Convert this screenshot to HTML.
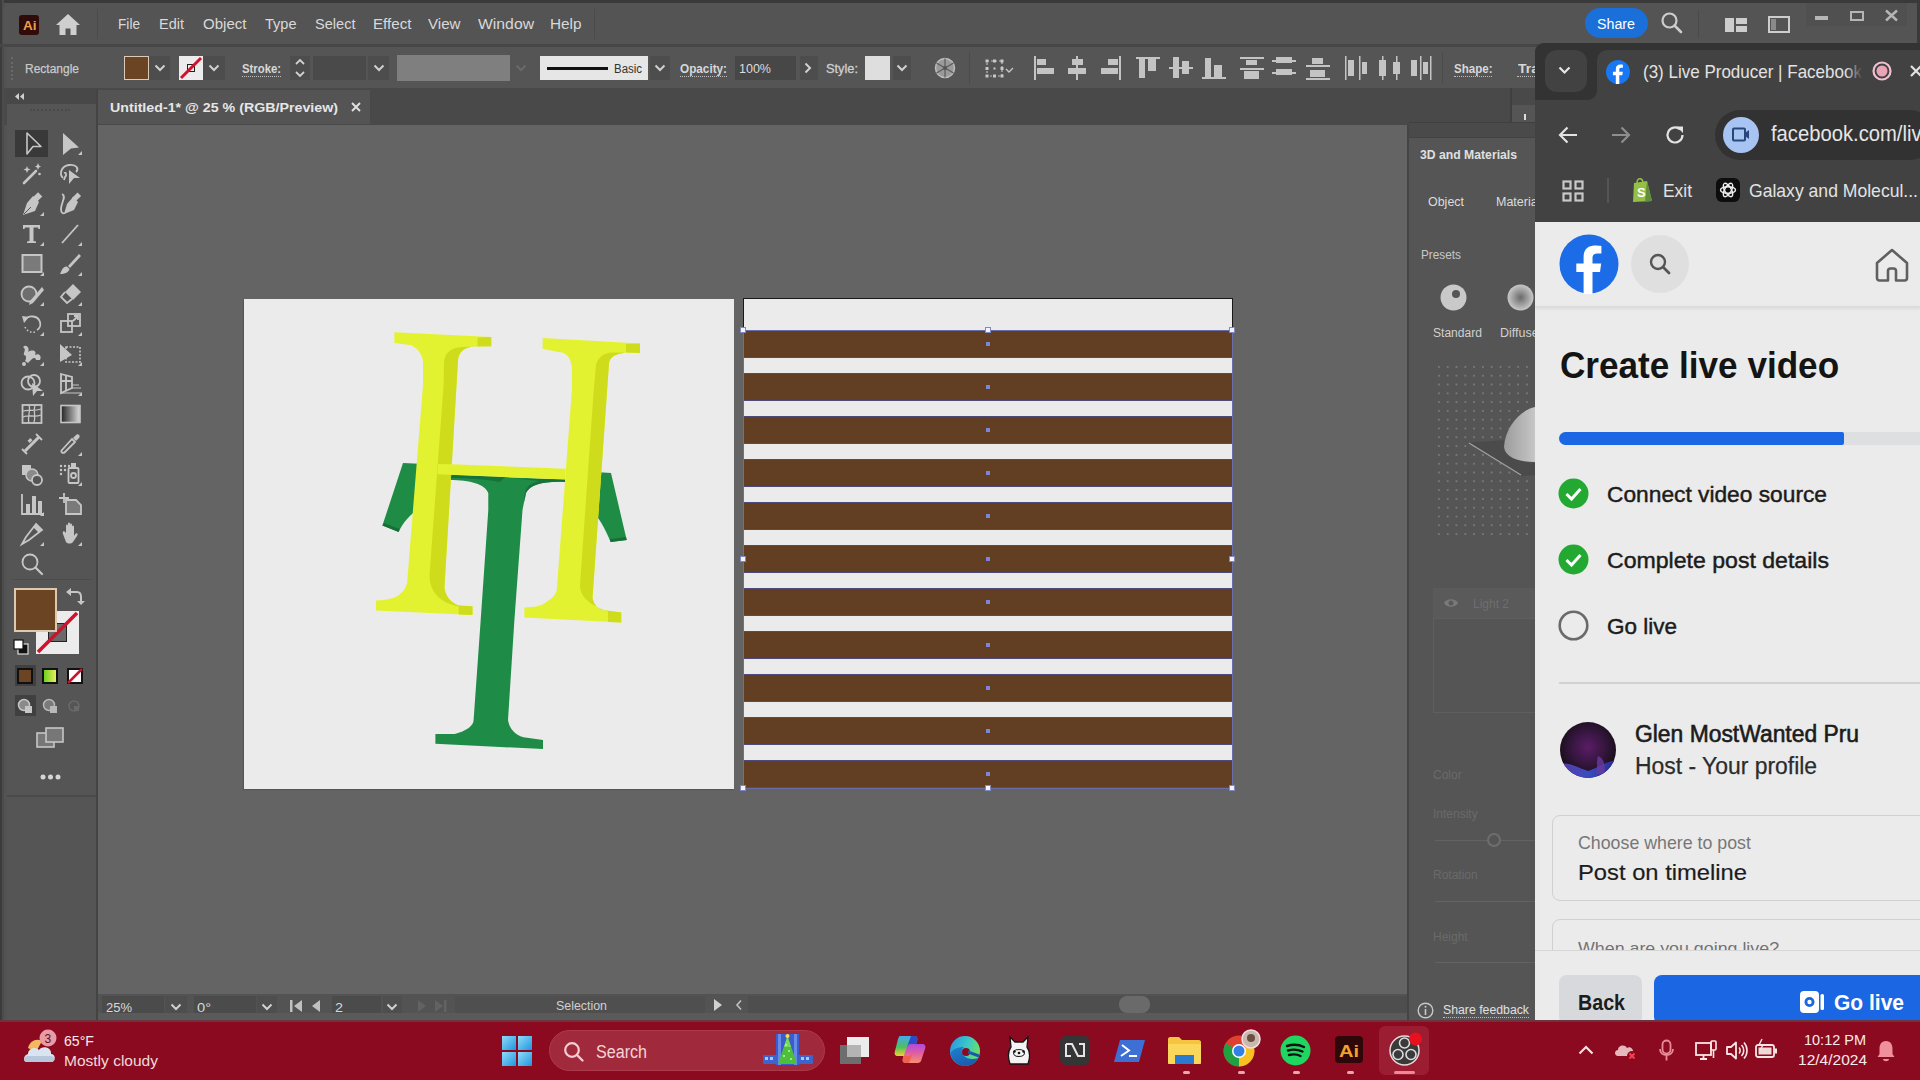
<!DOCTYPE html>
<html><head><meta charset="utf-8">
<style>
*{margin:0;padding:0;box-sizing:border-box}
html,body{width:1920px;height:1080px;overflow:hidden}
body{position:relative;background:#535353;font-family:"Liberation Sans",sans-serif;color:#dcdcdc}
.a{position:absolute}
.t{position:absolute;white-space:nowrap;line-height:1;transform-origin:0 0}
svg{position:absolute;overflow:visible}
.dd{position:absolute;background:#4b4b4b}
.chev{position:absolute;width:8px;height:8px;border-right:2px solid #d0d0d0;border-bottom:2px solid #d0d0d0;transform:rotate(45deg)}
</style></head><body>

<!-- outer frame -->
<div class="a" style="left:0;top:0;width:1920px;height:3px;background:#3a3a3a"></div>
<div class="a" style="left:0;top:0;width:4px;height:1020px;background:#4c4c4c;border-left:2px solid #3c3c3c"></div>

<!-- MENU BAR -->
<div id="menubar" class="a" style="left:3px;top:3px;width:1914px;height:41px;background:#545454;border-top-right-radius:6px;border-top-left-radius:6px"></div>
<div class="a" style="left:1917px;top:0;width:3px;height:47px;background:#3a3a3a"></div>
<div class="a" style="left:19px;top:15px;width:20px;height:20px;background:#310a0a;border-radius:3px"></div>
<div class="t" style="left:22.5px;top:19.0px;font-size:13.0px;color:#f0a048;font-weight:700;transform:scaleX(1.038);">Ai</div>
<svg style="left:56px;top:14px" width="24" height="22" viewBox="0 0 24 22"><path d="M12 0 L24 11 L20.5 11 L20.5 21 L14.5 21 L14.5 14.5 L9.5 14.5 L9.5 21 L3.5 21 L3.5 11 L0 11 Z" fill="#cfcfcf"/></svg>
<div class="a" style="left:97px;top:9px;width:1px;height:30px;background:#4a4a4a"></div>
<div class="t" style="left:118.0px;top:15.9px;font-size:15.5px;color:#d9d9d9;transform:scaleX(0.881);">File</div>
<div class="t" style="left:159.0px;top:15.9px;font-size:15.5px;color:#d9d9d9;transform:scaleX(0.936);">Edit</div>
<div class="t" style="left:203.0px;top:15.9px;font-size:15.5px;color:#d9d9d9;transform:scaleX(0.971);">Object</div>
<div class="t" style="left:265.0px;top:15.9px;font-size:15.5px;color:#d9d9d9;transform:scaleX(0.937);">Type</div>
<div class="t" style="left:314.5px;top:15.9px;font-size:15.5px;color:#d9d9d9;transform:scaleX(0.940);">Select</div>
<div class="t" style="left:372.5px;top:15.9px;font-size:15.5px;color:#d9d9d9;transform:scaleX(0.979);">Effect</div>
<div class="t" style="left:428.0px;top:15.9px;font-size:15.5px;color:#d9d9d9;transform:scaleX(0.976);">View</div>
<div class="t" style="left:477.5px;top:15.9px;font-size:15.5px;color:#d9d9d9;transform:scaleX(1.016);">Window</div>
<div class="t" style="left:550.0px;top:15.9px;font-size:15.5px;color:#d9d9d9;transform:scaleX(0.988);">Help</div>
<div class="a" style="left:594px;top:9px;width:1px;height:30px;background:#4a4a4a"></div>
<div class="a" style="left:1585px;top:8px;width:63px;height:30px;background:#1b6fd8;border-radius:15px"></div>
<div class="t" style="left:1597.0px;top:15.9px;font-size:15.5px;color:#ffffff;transform:scaleX(0.919);">Share</div>
<svg style="left:1661px;top:12px" width="22" height="22" viewBox="0 0 22 22"><circle cx="8.5" cy="8.5" r="7" fill="none" stroke="#cdcdcd" stroke-width="2.2"/><path d="M13.5 13.5 L20 20" stroke="#cdcdcd" stroke-width="2.6" stroke-linecap="round"/></svg>
<div class="a" style="left:1698px;top:10px;width:1px;height:28px;background:#4a4a4a"></div>
<svg style="left:1725px;top:18px" width="22" height="14" viewBox="0 0 22 14"><rect x="0" y="0" width="9" height="14" fill="#cdcdcd"/><rect x="11" y="0" width="11" height="6" fill="#cdcdcd"/><rect x="11" y="8" width="11" height="6" fill="#cdcdcd"/></svg>
<svg style="left:1768px;top:16px" width="22" height="17" viewBox="0 0 22 17"><rect x="1" y="1" width="20" height="15" fill="none" stroke="#cdcdcd" stroke-width="2"/><rect x="3" y="3" width="5" height="11" fill="#8a8a8a"/></svg>
<div class="a" style="left:1806px;top:3px;width:101px;height:23px;background:#505050;border-radius:0 0 3px 3px"></div>
<div class="a" style="left:1815px;top:16px;width:13px;height:4px;background:#b5b5b5"></div>
<div class="a" style="left:1850px;top:10.5px;width:14px;height:10px;border:2.5px solid #b5b5b5"></div>
<svg style="left:1885px;top:10px" width="13" height="11" viewBox="0 0 13 11"><path d="M1 0.5 L12 10.5 M12 0.5 L1 10.5" stroke="#b5b5b5" stroke-width="2.4"/></svg>
<div class="a" style="left:0;top:44px;width:1920px;height:3px;background:#474747"></div>

<!-- CONTROL BAR -->
<div id="ctrl" class="a" style="left:7px;top:47px;width:1910px;height:41px;background:#555555"></div>
<div class="a" style="left:11px;top:57px;width:2px;height:23px;border-left:2px dotted #6a6a6a"></div>
<div class="t" style="left:25.0px;top:63.4px;font-size:12.5px;color:#c9c9c9;transform:scaleX(0.959);-webkit-text-stroke:0.25px #c9c9c9;">Rectangle</div>
<div class="a" style="left:124px;top:56px;width:25px;height:24px;background:#6b4423;border:1.5px solid #d9cbb8"></div>
<div class="a" style="left:149px;top:56px;width:21px;height:24px;background:#4d4d4d"></div><svg style="left:153.5px;top:64.0px" width="12" height="8" viewBox="0 0 12 8"><path d="M1.5 1.5 L6 6 L10.5 1.5" fill="none" stroke="#d0d0d0" stroke-width="2"/></svg>
<div class="a" style="left:179px;top:56px;width:24px;height:24px;background:#ececec"></div>
<div class="a" style="left:187px;top:64px;width:8px;height:8px;border:1.5px solid #222"></div>
<svg style="left:179px;top:56px" width="24" height="24" viewBox="0 0 24 24"><path d="M2 22 L22 2" stroke="#d0112b" stroke-width="3"/></svg>
<div class="a" style="left:203px;top:56px;width:22px;height:24px;background:#4d4d4d"></div><svg style="left:208.0px;top:64.0px" width="12" height="8" viewBox="0 0 12 8"><path d="M1.5 1.5 L6 6 L10.5 1.5" fill="none" stroke="#d0d0d0" stroke-width="2"/></svg>
<div class="t" style="left:242.0px;top:62.7px;font-size:12.5px;color:#d8d8d8;font-weight:700;transform:scaleX(0.906);">Stroke:</div>
<div class="a" style="left:242px;top:75.5px;width:39px;height:1px;border-top:1px dotted #bdbdbd"></div>
<div class="a" style="left:290px;top:56px;width:20px;height:24px;background:#4d4d4d"></div>
<svg style="left:295px;top:58px" width="10" height="20" viewBox="0 0 10 20"><path d="M1 6 L5 2 L9 6 M1 14 L5 18 L9 14" fill="none" stroke="#d0d0d0" stroke-width="1.8"/></svg>
<div class="a" style="left:313px;top:56px;width:53px;height:24px;background:#4a4a4a"></div>
<div class="a" style="left:368px;top:56px;width:21px;height:24px;background:#4d4d4d"></div><svg style="left:372.5px;top:64.0px" width="12" height="8" viewBox="0 0 12 8"><path d="M1.5 1.5 L6 6 L10.5 1.5" fill="none" stroke="#d0d0d0" stroke-width="2"/></svg>
<div class="a" style="left:397px;top:55px;width:113px;height:26px;background:#7f7f7f"></div>
<svg style="left:515px;top:64px" width="12" height="8" viewBox="0 0 12 8"><path d="M1.5 1.5 L6 6 L10.5 1.5" fill="none" stroke="#6a6a6a" stroke-width="2"/></svg>
<div class="a" style="left:540px;top:56px;width:108px;height:24px;background:#e6e6e6"></div>
<div class="a" style="left:547px;top:67px;width:61px;height:2.5px;background:#111"></div>
<div class="t" style="left:614.0px;top:62.8px;font-size:12.0px;color:#333333;transform:scaleX(0.954);">Basic</div>
<div class="a" style="left:650px;top:56px;width:20px;height:24px;background:#4d4d4d"></div><svg style="left:654.0px;top:64.0px" width="12" height="8" viewBox="0 0 12 8"><path d="M1.5 1.5 L6 6 L10.5 1.5" fill="none" stroke="#d0d0d0" stroke-width="2"/></svg>
<div class="t" style="left:680.0px;top:62.7px;font-size:12.5px;color:#d8d8d8;font-weight:700;transform:scaleX(0.940);">Opacity:</div>
<div class="a" style="left:680px;top:75.5px;width:47px;height:1px;border-top:1px dotted #bdbdbd"></div>
<div class="a" style="left:735px;top:56px;width:61px;height:24px;background:#474747"></div>
<div class="t" style="left:739.0px;top:62.0px;font-size:13.0px;color:#dcdcdc;transform:scaleX(0.962);">100%</div>
<div class="a" style="left:800px;top:56px;width:18px;height:24px;background:#4d4d4d"></div>
<svg style="left:804px;top:62px" width="8" height="12" viewBox="0 0 8 12"><path d="M1.5 1.5 L6 6 L1.5 10.5" fill="none" stroke="#d0d0d0" stroke-width="2"/></svg>
<div class="t" style="left:826.0px;top:62.7px;font-size:12.5px;color:#cfcfcf;transform:scaleX(1.024);-webkit-text-stroke:0.3px #cfcfcf;">Style:</div>
<div class="a" style="left:865px;top:56px;width:25px;height:24px;background:#dedede"></div>
<div class="a" style="left:893px;top:56px;width:18px;height:24px;background:#4d4d4d"></div><svg style="left:896.0px;top:64.0px" width="12" height="8" viewBox="0 0 12 8"><path d="M1.5 1.5 L6 6 L10.5 1.5" fill="none" stroke="#d0d0d0" stroke-width="2"/></svg>
<svg style="left:934px;top:57px" width="22" height="22" viewBox="0 0 22 22"><circle cx="11" cy="11" r="9.5" fill="#9a9a9a" stroke="#bdbdbd" stroke-width="1.5"/><path d="M11 11 L11 1.5 M11 11 L19.5 6 M11 11 L19.5 16 M11 11 L11 20.5 M11 11 L2.5 16 M11 11 L2.5 6" stroke="#5a5a5a" stroke-width="1.2"/><circle cx="11" cy="11" r="2" fill="#555"/></svg>
<div class="a" style="left:969px;top:52px;width:1px;height:32px;background:#4c4c4c"></div>
<svg style="left:985px;top:59px" width="32" height="19" viewBox="0 0 32 19"><rect x="2" y="2" width="15" height="15" fill="none" stroke="#bdbdbd" stroke-width="1.2" stroke-dasharray="2 2"/><g fill="#c8c8c8"><rect x="0.5" y="0.5" width="3" height="3"/><rect x="8" y="0.5" width="3" height="3"/><rect x="15.5" y="0.5" width="3" height="3"/><rect x="0.5" y="8" width="3" height="3"/><rect x="15.5" y="8" width="3" height="3"/><rect x="0.5" y="15.5" width="3" height="3"/><rect x="8" y="15.5" width="3" height="3"/><rect x="15.5" y="15.5" width="3" height="3"/><rect x="8.5" y="8.5" width="2" height="2"/></g><path d="M21 10 L24 13 L28 9" fill="none" stroke="#c8c8c8" stroke-width="1.3"/></svg>
<svg style="left:1034px;top:56px" width="26" height="26" viewBox="0 0 26 26"><rect x="0" y="0" width="2" height="24" fill="#c4c4c4"/><rect x="3" y="3" width="9" height="6" fill="#c4c4c4"/><rect x="3" y="12" width="17" height="6" fill="#c4c4c4"/></svg>
<svg style="left:1067px;top:56px" width="26" height="26" viewBox="0 0 26 26"><rect x="9" y="0" width="2" height="24" fill="#c4c4c4"/><rect x="5" y="3" width="11" height="6" fill="#c4c4c4"/><rect x="1" y="12" width="18" height="6" fill="#c4c4c4"/></svg>
<svg style="left:1100px;top:56px" width="26" height="26" viewBox="0 0 26 26"><rect x="19" y="0" width="2" height="24" fill="#c4c4c4"/><rect x="8" y="3" width="10" height="6" fill="#c4c4c4"/><rect x="1" y="12" width="17" height="6" fill="#c4c4c4"/></svg>
<svg style="left:1136px;top:56px" width="26" height="26" viewBox="0 0 26 26"><rect x="0" y="1" width="24" height="2" fill="#c4c4c4"/><rect x="3" y="3" width="6" height="19" fill="#c4c4c4"/><rect x="12" y="3" width="8" height="12" fill="#c4c4c4"/></svg>
<svg style="left:1169px;top:56px" width="26" height="26" viewBox="0 0 26 26"><rect x="0" y="11" width="24" height="2" fill="#c4c4c4"/><rect x="4" y="1" width="6" height="21" fill="#c4c4c4"/><rect x="13" y="5" width="7" height="13" fill="#c4c4c4"/></svg>
<svg style="left:1202px;top:56px" width="26" height="26" viewBox="0 0 26 26"><rect x="0" y="21" width="24" height="2" fill="#c4c4c4"/><rect x="3" y="2" width="6" height="19" fill="#c4c4c4"/><rect x="12" y="9" width="8" height="12" fill="#c4c4c4"/></svg>
<svg style="left:1240px;top:56px" width="26" height="26" viewBox="0 0 26 26"><rect x="0" y="1" width="24" height="2" fill="#c4c4c4"/><rect x="6" y="4" width="11" height="5" fill="#c4c4c4"/><rect x="0" y="12" width="24" height="2" fill="#c4c4c4"/><rect x="4" y="15" width="15" height="8" fill="#c4c4c4"/></svg>
<svg style="left:1272px;top:56px" width="26" height="26" viewBox="0 0 26 26"><rect x="0" y="4" width="24" height="2" fill="#c4c4c4"/><rect x="4" y="1" width="16" height="6" fill="#c4c4c4"/><rect x="0" y="16" width="24" height="2" fill="#c4c4c4"/><rect x="4" y="13" width="16" height="6" fill="#c4c4c4"/></svg>
<svg style="left:1306px;top:56px" width="26" height="26" viewBox="0 0 26 26"><rect x="0" y="9" width="24" height="2" fill="#c4c4c4"/><rect x="6" y="2" width="11" height="6" fill="#c4c4c4"/><rect x="0" y="22" width="24" height="2" fill="#c4c4c4"/><rect x="4" y="14" width="15" height="7" fill="#c4c4c4"/></svg>
<svg style="left:1345px;top:56px" width="26" height="26" viewBox="0 0 26 26"><rect x="0" y="0" width="1.5" height="24" fill="#c4c4c4"/><rect x="3" y="4" width="6" height="16" fill="#c4c4c4"/><rect x="14" y="0" width="1.5" height="24" fill="#c4c4c4"/><rect x="17" y="6" width="5" height="12" fill="#c4c4c4"/></svg>
<svg style="left:1379px;top:56px" width="26" height="26" viewBox="0 0 26 26"><rect x="3" y="0" width="1.5" height="24" fill="#c4c4c4"/><rect x="0" y="4" width="7" height="16" fill="#c4c4c4"/><rect x="17" y="0" width="1.5" height="24" fill="#c4c4c4"/><rect x="14" y="6" width="7" height="12" fill="#c4c4c4"/></svg>
<svg style="left:1411px;top:56px" width="26" height="26" viewBox="0 0 26 26"><rect x="19" y="0" width="1.5" height="24" fill="#c4c4c4"/><rect x="0" y="4" width="6" height="16" fill="#c4c4c4"/><rect x="9" y="0" width="1.5" height="24" fill="#c4c4c4"/><rect x="12" y="6" width="5" height="12" fill="#c4c4c4"/></svg>
<div class="a" style="left:1442px;top:52px;width:1px;height:32px;background:#4c4c4c"></div>
<div class="t" style="left:1454.0px;top:62.7px;font-size:12.5px;color:#d8d8d8;font-weight:700;transform:scaleX(0.924);">Shape:</div>
<div class="a" style="left:1454px;top:75.5px;width:38px;height:1px;border-top:1px dotted #bdbdbd"></div>
<div class="t" style="left:1517.5px;top:62.7px;font-size:12.5px;color:#d8d8d8;font-weight:700;transform:scaleX(1.119);">Tra</div>
<div class="a" style="left:1517px;top:75.5px;width:18px;height:1px;border-top:1px dotted #bdbdbd"></div>

<!-- TAB BAR -->
<div class="a" style="left:4px;top:88px;width:1916px;height:37px;background:#494949"></div>
<div class="a" style="left:98px;top:90px;width:272px;height:34px;background:#545454"></div>
<div class="t" style="left:110.0px;top:100.8px;font-size:13.5px;color:#e6e6e6;font-weight:700;transform:scaleX(1.053);">Untitled-1* @ 25 % (RGB/Preview)</div>
<svg style="left:351px;top:102px" width="10" height="10" viewBox="0 0 10 10"><path d="M1 1 L9 9 M9 1 L1 9" stroke="#e0e0e0" stroke-width="2"/></svg>

<!-- LEFT TOOLBAR -->
<div class="a" style="left:7px;top:89px;width:89px;height:15px;background:#484848"></div>
<svg style="left:15px;top:93px" width="10" height="7" viewBox="0 0 10 7"><path d="M4 0 L0 3.5 L4 7 Z M9 0 L5 3.5 L9 7 Z" fill="#d0d0d0"/></svg>
<div id="tools" class="a" style="left:7px;top:104px;width:89px;height:916px;background:#555555"></div>
<div class="a" style="left:30px;top:109px;width:40px;height:2px;border-top:2px dotted #4a4a4a"></div>
<div class="a" style="left:96px;top:89px;width:2px;height:931px;background:#444"></div>
<div class="a" style="left:15px;top:130px;width:33px;height:27px;background:#393939"></div>
<svg style="left:19px;top:130px" width="26" height="26" viewBox="0 0 26 26"><path d="M8 3 L22 16.5 L14 16.5 L8 24 Z" fill="none" stroke="#c6c6c6" stroke-width="1.6" stroke-linejoin="round"/></svg>
<svg style="left:57px;top:130px" width="26" height="26" viewBox="0 0 26 26"><path d="M6 3 L22 17.5 L14 18.5 L6 25 Z" fill="#c6c6c6"/><path d="M25 21 L25 25 L21 25 Z" fill="#c6c6c6"/></svg>
<svg style="left:19px;top:160px" width="26" height="26" viewBox="0 0 26 26"><path d="M5 23 L17 11" stroke="#c6c6c6" stroke-width="2.6" stroke-linecap="round"/><path d="M8 6 L9 8.5 L11.5 9.5 L9 10.5 L8 13 L7 10.5 L4.5 9.5 L7 8.5Z M19 3 L20 5.5 L22 6.5 L20 7.5 L19 10 L18 7.5 L16 6.5 L18 5.5Z" fill="#c6c6c6"/><circle cx="20.5" cy="14" r="1.3" fill="#c6c6c6"/></svg>
<svg style="left:57px;top:160px" width="26" height="26" viewBox="0 0 26 26"><path d="M6 18 C2 14 4 6 12 5 C20 4 22 9 19 12" fill="none" stroke="#c6c6c6" stroke-width="1.8"/><path d="M7 13 C9 12 10 15 8 17 L7 20" fill="none" stroke="#c6c6c6" stroke-width="1.8"/><path d="M12 10 L23 18 L17 18 L12 24 Z" fill="#c6c6c6"/></svg>
<svg style="left:19px;top:191px" width="26" height="26" viewBox="0 0 26 26"><path d="M14 5 L20 11 L16 20 L4 24 L8 12 Z" fill="#c6c6c6"/><rect x="15" y="2" width="6" height="9" transform="rotate(45 18 6.5)" fill="#c6c6c6"/><path d="M5 23 L12 16" stroke="#555" stroke-width="1"/><path d="M25 21 L25 25 L21 25 Z" fill="#c6c6c6"/></svg>
<svg style="left:57px;top:191px" width="26" height="26" viewBox="0 0 26 26"><path d="M16 6 L21 11 L17 19 L7 23 L10 13 Z" fill="#c6c6c6"/><rect x="17" y="2" width="5" height="8" transform="rotate(45 19.5 6)" fill="#c6c6c6"/><path d="M5 3 C10 5 4 12 4 18 C4 22 6 23 8 22" fill="none" stroke="#c6c6c6" stroke-width="1.8"/></svg>
<svg style="left:19px;top:221px" width="26" height="26" viewBox="0 0 26 26"><path d="M4 4 L21 4 L21 8 L19.5 8 L19 6.5 L14.5 6.5 L14.5 20 L17 20.5 L17 22 L8 22 L8 20.5 L10.5 20 L10.5 6.5 L6 6.5 L5.5 8 L4 8 Z" fill="#c6c6c6"/><path d="M25 21 L25 25 L21 25 Z" fill="#c6c6c6"/></svg>
<svg style="left:57px;top:221px" width="26" height="26" viewBox="0 0 26 26"><path d="M5 22 L21 4" stroke="#c6c6c6" stroke-width="1.8"/><path d="M25 21 L25 25 L21 25 Z" fill="#c6c6c6"/></svg>
<svg style="left:19px;top:251px" width="26" height="26" viewBox="0 0 26 26"><rect x="3.5" y="4" width="19" height="17" fill="#7a7a7a" stroke="#c6c6c6" stroke-width="2"/><path d="M25 21 L25 25 L21 25 Z" fill="#c6c6c6"/></svg>
<svg style="left:57px;top:251px" width="26" height="26" viewBox="0 0 26 26"><path d="M22 3 L24 5 L13 17 L11 15 Z" fill="#c6c6c6"/><path d="M10 15.5 C6 15 5 19 3 23 C8 23 12 21 12.5 18 Z" fill="#c6c6c6"/><path d="M25 21 L25 25 L21 25 Z" fill="#c6c6c6"/></svg>
<svg style="left:19px;top:281px" width="26" height="26" viewBox="0 0 26 26"><circle cx="10" cy="13" r="7.5" fill="#6e6e6e" stroke="#c6c6c6" stroke-width="1.8"/><path d="M23 6 L11 20 L10 24 L14 22 L25 9 Z" fill="#c6c6c6"/><path d="M25 21 L25 25 L21 25 Z" fill="#c6c6c6"/></svg>
<svg style="left:57px;top:281px" width="26" height="26" viewBox="0 0 26 26"><path d="M16 3 L24 11 L16 19 L8 11 Z" fill="#c6c6c6"/><path d="M8 11 L4 16 L10 22 L15 18" fill="none" stroke="#c6c6c6" stroke-width="1.8"/><path d="M25 21 L25 25 L21 25 Z" fill="#c6c6c6"/></svg>
<svg style="left:19px;top:311px" width="26" height="26" viewBox="0 0 26 26"><path d="M6 9 C9 4 19 4 21 11 C22 15 20 18 18 19" fill="none" stroke="#c6c6c6" stroke-width="1.8"/><path d="M3 5 L10 6 L5 12 Z" fill="#c6c6c6"/><path d="M6 16 C8 20 12 22 16 21" fill="none" stroke="#c6c6c6" stroke-width="1.6" stroke-dasharray="1.5 2"/><path d="M25 21 L25 25 L21 25 Z" fill="#c6c6c6"/></svg>
<svg style="left:57px;top:311px" width="26" height="26" viewBox="0 0 26 26"><rect x="11" y="3" width="12" height="12" fill="none" stroke="#c6c6c6" stroke-width="1.8"/><rect x="4" y="10" width="11" height="11" fill="none" stroke="#c6c6c6" stroke-width="1.8"/><path d="M16 10 L21 5 M17 5 L21 5 L21 9" fill="none" stroke="#c6c6c6" stroke-width="1.8"/><path d="M25 21 L25 25 L21 25 Z" fill="#c6c6c6"/></svg>
<svg style="left:19px;top:341px" width="26" height="26" viewBox="0 0 26 26"><path d="M4 6 C8 2 11 8 9 11 C14 8 18 10 16 14 C20 12 23 15 21 19 L17 19 C17 17 15 16 13 18 L9 22 L6 20 C8 17 7 14 5 14 C4 11 8 9 4 6 Z" fill="#c6c6c6"/><circle cx="5" cy="23" r="2" fill="#c6c6c6"/><path d="M25 21 L25 25 L21 25 Z" fill="#c6c6c6"/></svg>
<svg style="left:57px;top:341px" width="26" height="26" viewBox="0 0 26 26"><rect x="9" y="6" width="14" height="15" fill="none" stroke="#c6c6c6" stroke-width="1.6" stroke-dasharray="2 1.5"/><path d="M3 3 L15 14 L3 21 Z" fill="#c6c6c6"/><path d="M25 21 L25 25 L21 25 Z" fill="#c6c6c6"/></svg>
<svg style="left:19px;top:371px" width="26" height="26" viewBox="0 0 26 26"><circle cx="9" cy="12" r="6.5" fill="none" stroke="#c6c6c6" stroke-width="1.8"/><circle cx="15" cy="10" r="6" fill="none" stroke="#c6c6c6" stroke-width="1.8"/><path d="M13 12 L24 20 L18 20 L14 25 Z" fill="#c6c6c6"/><path d="M25 21 L25 25 L21 25 Z" fill="#c6c6c6"/></svg>
<svg style="left:57px;top:371px" width="26" height="26" viewBox="0 0 26 26"><path d="M4 3 L15 6 L15 17 L4 22 Z M4 10 L15 10 M9 4 L9 20" fill="none" stroke="#c6c6c6" stroke-width="1.8"/><path d="M15 14 L22 14 M15 17 L24 17 M4 22 L24 22" stroke="#c6c6c6" stroke-width="1"/><path d="M25 21 L25 25 L21 25 Z" fill="#c6c6c6"/></svg>
<svg style="left:19px;top:401px" width="26" height="26" viewBox="0 0 26 26"><rect x="3.5" y="4" width="19" height="18" fill="none" stroke="#c6c6c6" stroke-width="1.8"/><path d="M4 10 C10 8 14 11 22 8 M4 16 C10 13 15 17 22 14 M10 4 C12 10 8 16 10 22 M16 4 C14 10 17 15 15 22" fill="none" stroke="#c6c6c6" stroke-width="1.3"/></svg>
<svg style="left:57px;top:401px" width="26" height="26" viewBox="0 0 26 26"><defs><linearGradient id="gr1"><stop offset="0" stop-color="#222"/><stop offset="1" stop-color="#ddd"/></linearGradient></defs><rect x="4" y="4.5" width="19" height="17" fill="url(#gr1)" stroke="#c6c6c6" stroke-width="1.6"/></svg>
<svg style="left:19px;top:431px" width="26" height="26" viewBox="0 0 26 26"><path d="M6 20 L20 6" stroke="#c6c6c6" stroke-width="3"/><path d="M3 18 L8 23 M17 3 L23 9" stroke="#c6c6c6" stroke-width="1.8"/><rect x="9" y="8" width="4" height="3" transform="rotate(-45 11 9.5)" fill="#c6c6c6"/></svg>
<svg style="left:57px;top:431px" width="26" height="26" viewBox="0 0 26 26"><path d="M19 4 C21 2 24 5 22 7 L19 10 L16 7 Z" fill="#c6c6c6"/><path d="M15 8 L18 11 L8 21 C6 23 3 21 5 19 Z" fill="none" stroke="#c6c6c6" stroke-width="1.8"/><path d="M25 21 L25 25 L21 25 Z" fill="#c6c6c6"/></svg>
<svg style="left:19px;top:461px" width="26" height="26" viewBox="0 0 26 26"><rect x="3" y="4" width="9" height="10" fill="#c6c6c6"/><circle cx="13" cy="14" r="6" fill="#8a8a8a" stroke="#c6c6c6" stroke-width="1.5"/><circle cx="18" cy="19" r="5" fill="#555" stroke="#c6c6c6" stroke-width="1.8"/></svg>
<svg style="left:57px;top:461px" width="26" height="26" viewBox="0 0 26 26"><g fill="#c6c6c6"><circle cx="4" cy="5" r="1.2"/><circle cx="8" cy="5" r="1.2"/><circle cx="12" cy="5" r="1.2"/><circle cx="4" cy="9" r="1.2"/><circle cx="8" cy="9" r="1.2"/><circle cx="4" cy="13" r="1.2"/><rect x="14" y="2" width="5" height="4"/></g><rect x="11.5" y="7" width="10" height="15" rx="1" fill="none" stroke="#c6c6c6" stroke-width="1.8"/><circle cx="16.5" cy="14.5" r="2.5" fill="none" stroke="#c6c6c6" stroke-width="1.8"/><path d="M25 21 L25 25 L21 25 Z" fill="#c6c6c6"/></svg>
<svg style="left:19px;top:491px" width="26" height="26" viewBox="0 0 26 26"><path d="M3 3 L3 23 L24 23" fill="none" stroke="#c6c6c6" stroke-width="1.8"/><rect x="7" y="13" width="4" height="9" fill="#c6c6c6"/><rect x="13" y="5" width="4" height="17" fill="#c6c6c6"/><rect x="19" y="10" width="4" height="12" fill="#c6c6c6"/><path d="M25 21 L25 25 L21 25 Z" fill="#c6c6c6"/></svg>
<svg style="left:57px;top:491px" width="26" height="26" viewBox="0 0 26 26"><path d="M7 2 L7 12 M2 7 L12 7" fill="none" stroke="#c6c6c6" stroke-width="1.8"/><path d="M9 9 L19 9 L24 14 L24 23 L9 23 Z" fill="#7a7a7a" stroke="#c6c6c6" stroke-width="1.8"/></svg>
<svg style="left:19px;top:521px" width="26" height="26" viewBox="0 0 26 26"><path d="M17 3 L23 9 L10 19 L3 23 L7 16 Z" fill="none" stroke="#c6c6c6" stroke-width="1.8"/><path d="M17 3 L23 9 L20 12 L14 6 Z" fill="#c6c6c6"/><path d="M25 21 L25 25 L21 25 Z" fill="#c6c6c6"/></svg>
<svg style="left:57px;top:521px" width="26" height="26" viewBox="0 0 26 26"><path d="M6 13 C5 10 7 9 9 12 L9 5 C9 3 11 3 11 5 L11 3 C11 1 13 1 13 3 L13 4 C13 2 15 2 15 4 L15 6 C15 4 17 4 17 6 L17 15 C19 11 22 12 20 15 L16 21 C14 23 11 23 9 21 Z" fill="#c6c6c6"/><path d="M25 21 L25 25 L21 25 Z" fill="#c6c6c6"/></svg>
<svg style="left:19px;top:551px" width="26" height="26" viewBox="0 0 26 26"><circle cx="11" cy="11" r="7.5" fill="none" stroke="#c6c6c6" stroke-width="1.8"/><path d="M16.5 16.5 L23 23" stroke="#c6c6c6" stroke-width="2.2" stroke-linecap="round"/></svg>
<div class="a" style="left:12px;top:579px;width:80px;height:1px;background:#4c4c4c"></div>
<div class="a" style="left:36px;top:611px;width:43px;height:43px;background:#ececec"></div>
<div class="a" style="left:48px;top:623px;width:19px;height:19px;background:#6a6a6a;border:1.5px solid #222"></div>
<svg style="left:36px;top:611px" width="43" height="43" viewBox="0 0 43 43"><path d="M2 41 L41 2" stroke="#d0112b" stroke-width="3.5"/></svg>
<div class="a" style="left:14px;top:588px;width:43px;height:44px;background:#6b4423;border:2px solid #dcc9b0"></div>
<svg style="left:66px;top:588px" width="18" height="18" viewBox="0 0 18 18"><path d="M3 4 L11 4 C14 4 15 6 15 9 L15 13" fill="none" stroke="#c6c6c6" stroke-width="2"/><path d="M0 4 L5 0 L5 8 Z M11 13 L19 13 L15 17 Z" fill="#c6c6c6"/></svg>
<svg style="left:13px;top:639px" width="16" height="16" viewBox="0 0 16 16"><rect x="5" y="5" width="10" height="10" fill="#111" stroke="#ddd" stroke-width="1.2"/><rect x="1" y="1" width="9" height="9" fill="#fff" stroke="#111" stroke-width="1.2"/></svg>
<div class="a" style="left:15px;top:665px;width:21px;height:21px;background:#404040"></div>
<div class="a" style="left:17px;top:668px;width:16px;height:16px;background:#6b4423;border:2px solid #111"></div>
<div class="a" style="left:42px;top:668px;width:16px;height:16px;background:linear-gradient(90deg,#6fd21e,#e8f060);border:2px solid #111"></div>
<div class="a" style="left:67px;top:668px;width:16px;height:16px;background:#fff;border:2px solid #111;overflow:hidden"></div>
<svg style="left:67px;top:668px" width="16" height="16" viewBox="0 0 16 16"><path d="M1 15 L15 1" stroke="#d0112b" stroke-width="2.5"/></svg>
<div class="a" style="left:15px;top:695px;width:21px;height:21px;background:#404040"></div>
<svg style="left:16px;top:697px" width="20" height="18" viewBox="0 0 20 18"><circle cx="8" cy="8" r="5.5" fill="#8a8a8a" stroke="#c6c6c6" stroke-width="1.5"/><rect x="9" y="9" width="7" height="7" fill="#c6c6c6"/></svg>
<svg style="left:41px;top:697px" width="20" height="18" viewBox="0 0 20 18"><circle cx="8" cy="8" r="5.5" fill="#7a7a7a" stroke="#b8b8b8" stroke-width="1.5"/><rect x="9" y="9" width="7" height="7" fill="#b8b8b8"/></svg>
<svg style="left:66px;top:697px" width="18" height="18" viewBox="0 0 18 18"><circle cx="8" cy="9" r="5" fill="none" stroke="#6a6a6a" stroke-width="1.5"/><rect x="8" y="9" width="5" height="5" fill="#6a6a6a"/></svg>
<svg style="left:36px;top:727px" width="29" height="22" viewBox="0 0 29 22"><rect x="1" y="6" width="17" height="14" fill="#777" stroke="#c6c6c6" stroke-width="1.6"/><rect x="10" y="1" width="17" height="14" fill="#777" stroke="#c6c6c6" stroke-width="1.6"/></svg>
<svg style="left:40px;top:774px" width="21" height="6" viewBox="0 0 21 6"><circle cx="3" cy="3" r="2.5" fill="#d6d6d6"/><circle cx="10.5" cy="3" r="2.5" fill="#d6d6d6"/><circle cx="18" cy="3" r="2.5" fill="#d6d6d6"/></svg>
<div class="a" style="left:7px;top:795px;width:89px;height:2px;background:#4a4a4a"></div>

<!-- CANVAS -->
<div id="canvas" class="a" style="left:98px;top:125px;width:1309px;height:869px;background:#646464"></div>
<div class="a" style="left:244px;top:299px;width:490px;height:490px;background:#ebebeb;box-shadow:-1px 1px 1px #555"></div>
<svg style="left:244px;top:299px" width="490" height="490" viewBox="244 299 490 490">
 <path d="M403 463 L425 464 L425 505 C412 512 403 522 398.7 531.9 L382.4 525.6 Z" fill="#1e8c45"/>
 <path d="M382.4 525.6 L398.7 531.9 L399.5 529 L384 523 Z" fill="#176f37"/>
 <path d="M580 471 L611 473 L626.7 540 L610.6 542 C605 528 598 515 586 505 L580 500 Z" fill="#1e8c45"/>
 <path d="M610.6 542 L626.7 540 L626 537 L610 539 Z" fill="#176f37"/>
 <path d="M437.5 474.2 L565 479.6 L565 482 C545 481 530 484 525.8 493.3 L522.5 510 L514.4 620 L508 720 C509 728 515 735 523.5 737.3 L543 739.9 L543 749 L435.4 743.8 L435.4 734 L454.8 734 C466 731 473.6 726 473.6 720 L480.7 620 L488.3 510 L488.3 493.3 C485 484 470 480 450 480 L437.5 480 Z" fill="#1e8c46"/>
 <path d="M437.5 474.2 L505 477 L500 482 C490 480 470 478 450 478 L437.5 479 Z" fill="#17713a"/>
 <path d="M515 478.5 L565 479.6 L565 482 C545 481 530 484 525.8 493.3 L524.5 502 C523 490 528 483 540 481 Z" fill="#17713a"/>
 <path d="M394.4 332.2 L491.25 336.9 L491.25 346.25 L472.5 346.6 C464 348 459 352 458 360 L444.4 588 C446 598 452 603 458.75 605.5 L472.5 606.25 L472.5 615 L376 610.6 L376 600.6 C388 600 396 598 400 594 C405 590 407.5 585 407.5 578 L423 385 L423 362 C422 352 415 346 410 345 L394.4 343.1 Z" fill="#e3f230"/>
 <path d="M477.5 337.5 L491.25 336.9 L491.25 346.25 L472.5 346.6 C464 348 459 352 458 360 L444.4 588 C446 598 452 603 458.75 605.5 L472.5 606.25 L472.5 615 L458.75 614.6 L458.75 606.5 C443 603 429.5 595 429.5 575 L443.6 385 L444 362 C445 352 451 348 462 347 L477.5 346.6 Z" fill="#cedc1c"/>
 <path d="M542.8 338.1 L640 343.4 L640 353.1 L625.6 352.5 C615 354 610 357 609 363 L592.5 598 C594 605 598 609 602.5 610 L621.25 612.5 L621.25 622.5 L524.4 617.5 L524.4 607.5 C535 607 541 606 545 603 C551 599 556.9 595 556.9 588 L571.9 390 L571.9 368 C571 356 565 352 558 351.9 L542.5 348.75 Z" fill="#e3f230"/>
 <path d="M626 343.9 L640 343.4 L640 353.1 L625.6 352.5 C615 354 610 357 609 363 L592.5 598 C594 605 598 609 602.5 610 L621.25 612.5 L621.25 622.5 L608 622 L608 611.5 C592 606 580 598 580 585 L593.75 390 L596 365 C598 357 604 353 612 352.5 L626 352.5 Z" fill="#cedc1c"/>
 <path d="M438 464 L451.7 464.2 L565.8 468.75 L565 479.6 L437.5 474.2 Z" fill="#e3f230"/>
</svg>
<!-- artboard 2 -->
<div class="a" style="left:743px;top:298px;width:490px;height:491px;background:#ebebeb;border-top:1.5px solid #1a1a1a;border-left:1px solid #1a1a1a;border-right:1px solid #1a1a1a"></div>
<div class="a" style="left:744px;top:331px;width:488px;height:26px;background:#623e23;box-shadow:0 -1px 0 #4e4a7c,0 1px 0 #4e4a7c"></div>
<div class="a" style="left:986px;top:342px;width:4px;height:4px;background:#7b86d8"></div>
<div class="a" style="left:744px;top:374px;width:488px;height:26px;background:#623e23;box-shadow:0 -1px 0 #4e4a7c,0 1px 0 #4e4a7c"></div>
<div class="a" style="left:986px;top:385px;width:4px;height:4px;background:#7b86d8"></div>
<div class="a" style="left:744px;top:417px;width:488px;height:26px;background:#623e23;box-shadow:0 -1px 0 #4e4a7c,0 1px 0 #4e4a7c"></div>
<div class="a" style="left:986px;top:428px;width:4px;height:4px;background:#7b86d8"></div>
<div class="a" style="left:744px;top:460px;width:488px;height:26px;background:#623e23;box-shadow:0 -1px 0 #4e4a7c,0 1px 0 #4e4a7c"></div>
<div class="a" style="left:986px;top:471px;width:4px;height:4px;background:#7b86d8"></div>
<div class="a" style="left:744px;top:503px;width:488px;height:26px;background:#623e23;box-shadow:0 -1px 0 #4e4a7c,0 1px 0 #4e4a7c"></div>
<div class="a" style="left:986px;top:514px;width:4px;height:4px;background:#7b86d8"></div>
<div class="a" style="left:744px;top:546px;width:488px;height:26px;background:#623e23;box-shadow:0 -1px 0 #4e4a7c,0 1px 0 #4e4a7c"></div>
<div class="a" style="left:986px;top:557px;width:4px;height:4px;background:#7b86d8"></div>
<div class="a" style="left:744px;top:589px;width:488px;height:26px;background:#623e23;box-shadow:0 -1px 0 #4e4a7c,0 1px 0 #4e4a7c"></div>
<div class="a" style="left:986px;top:600px;width:4px;height:4px;background:#7b86d8"></div>
<div class="a" style="left:744px;top:632px;width:488px;height:26px;background:#623e23;box-shadow:0 -1px 0 #4e4a7c,0 1px 0 #4e4a7c"></div>
<div class="a" style="left:986px;top:643px;width:4px;height:4px;background:#7b86d8"></div>
<div class="a" style="left:744px;top:675px;width:488px;height:26px;background:#623e23;box-shadow:0 -1px 0 #4e4a7c,0 1px 0 #4e4a7c"></div>
<div class="a" style="left:986px;top:686px;width:4px;height:4px;background:#7b86d8"></div>
<div class="a" style="left:744px;top:718px;width:488px;height:26px;background:#623e23;box-shadow:0 -1px 0 #4e4a7c,0 1px 0 #4e4a7c"></div>
<div class="a" style="left:986px;top:729px;width:4px;height:4px;background:#7b86d8"></div>
<div class="a" style="left:744px;top:761px;width:488px;height:26px;background:#623e23;box-shadow:0 -1px 0 #4e4a7c,0 1px 0 #4e4a7c"></div>
<div class="a" style="left:986px;top:772px;width:4px;height:4px;background:#7b86d8"></div>
<div class="a" style="left:743px;top:330px;width:490px;height:459px;border:1px solid #6a6ea8"></div>
<div class="a" style="left:740px;top:327px;width:6px;height:6px;background:#f4f4ff;border:1px solid #8088c8"></div>
<div class="a" style="left:985px;top:327px;width:6px;height:6px;background:#f4f4ff;border:1px solid #8088c8"></div>
<div class="a" style="left:1229px;top:327px;width:6px;height:6px;background:#f4f4ff;border:1px solid #8088c8"></div>
<div class="a" style="left:740px;top:556px;width:6px;height:6px;background:#f4f4ff;border:1px solid #8088c8"></div>
<div class="a" style="left:1229px;top:556px;width:6px;height:6px;background:#f4f4ff;border:1px solid #8088c8"></div>
<div class="a" style="left:740px;top:785px;width:6px;height:6px;background:#f4f4ff;border:1px solid #8088c8"></div>
<div class="a" style="left:985px;top:785px;width:6px;height:6px;background:#f4f4ff;border:1px solid #8088c8"></div>
<div class="a" style="left:1229px;top:785px;width:6px;height:6px;background:#f4f4ff;border:1px solid #8088c8"></div>

<!-- status bar -->
<div class="a" style="left:98px;top:994px;width:1310px;height:19px;background:#535353"></div>
<div class="a" style="left:98px;top:1013px;width:1310px;height:7px;background:#5a5a5a"></div>
<div class="a" style="left:102px;top:996px;width:62px;height:17px;background:#4b4b4b"></div>
<div class="t" style="left:106.0px;top:1001.0px;font-size:13.0px;color:#d8d8d8;transform:scaleX(0.999);">25%</div>
<div class="a" style="left:165px;top:996px;width:22px;height:17px;background:#4e4e4e"></div>
<svg style="left:170px;top:1003px" width="12" height="8" viewBox="0 0 12 8"><path d="M1.5 1.5 L6 6 L10.5 1.5" fill="none" stroke="#d0d0d0" stroke-width="2"/></svg>
<div class="a" style="left:194px;top:996px;width:62px;height:17px;background:#4b4b4b"></div>
<div class="t" style="left:197.0px;top:1001.0px;font-size:13.0px;color:#d8d8d8;transform:scaleX(1.127);">0°</div>
<div class="a" style="left:257px;top:996px;width:20px;height:17px;background:#4e4e4e"></div>
<svg style="left:261px;top:1003px" width="12" height="8" viewBox="0 0 12 8"><path d="M1.5 1.5 L6 6 L10.5 1.5" fill="none" stroke="#d0d0d0" stroke-width="2"/></svg>
<svg style="left:290px;top:1000px" width="32" height="12" viewBox="0 0 32 12"><rect x="0" y="0" width="2.5" height="12" fill="#c0c0c0"/><path d="M12 0 L4 6 L12 12 Z M30 0 L22 6 L30 12 Z" fill="#c0c0c0"/></svg>
<div class="a" style="left:332px;top:996px;width:49px;height:17px;background:#4b4b4b"></div>
<div class="t" style="left:335.0px;top:1001.0px;font-size:13.0px;color:#d8d8d8;transform:scaleX(1.107);">2</div>
<div class="a" style="left:383px;top:996px;width:19px;height:17px;background:#4e4e4e"></div>
<svg style="left:386px;top:1003px" width="12" height="8" viewBox="0 0 12 8"><path d="M1.5 1.5 L6 6 L10.5 1.5" fill="none" stroke="#d0d0d0" stroke-width="2"/></svg>
<svg style="left:416px;top:1000px" width="32" height="12" viewBox="0 0 32 12"><path d="M2 0 L10 6 L2 12 Z M19 0 L27 6 L19 12 Z" fill="#626262"/><rect x="28" y="0" width="2.5" height="12" fill="#626262"/></svg>
<div class="a" style="left:455px;top:996px;width:250px;height:17px;background:#4f4f4f"></div>
<div class="t" style="left:556.0px;top:1000.4px;font-size:12.5px;color:#cfcfcf;transform:scaleX(0.992);">Selection</div>
<svg style="left:713px;top:999px" width="10" height="12" viewBox="0 0 10 12"><path d="M1 0 L9 6 L1 12 Z" fill="#d0d0d0"/></svg>
<svg style="left:735px;top:999px" width="8" height="12" viewBox="0 0 8 12"><path d="M6 1.5 L2 6 L6 10.5" fill="none" stroke="#c0c0c0" stroke-width="1.6"/></svg>
<div class="a" style="left:748px;top:996px;width:659px;height:17px;background:#4e4e4e"></div>
<div class="a" style="left:1119px;top:996px;width:31px;height:17px;background:#6a6a6a;border-radius:8px"></div>

<!-- 3D PANEL -->
<div class="a" style="left:1407px;top:125px;width:2px;height:895px;background:#444"></div>
<div class="a" style="left:1510px;top:88px;width:25px;height:37px;background:#494949;border-left:2px solid #404040"></div>
<div class="a" style="left:1512px;top:105px;width:23px;height:20px;background:#555"></div>
<div class="a" style="left:1524px;top:114px;width:2px;height:6px;background:#ddd"></div>
<div class="a" style="left:1409px;top:122px;width:126px;height:16px;background:#4a4a4a;border-top:1px solid #404040;border-bottom:1px solid #424242"></div>
<div id="panel3d" class="a" style="left:1409px;top:138px;width:126px;height:882px;background:#555555"></div>
<div class="t" style="left:1420.0px;top:148.8px;font-size:12.0px;color:#e0e0e0;font-weight:700;transform:scaleX(1.017);">3D and Materials</div>
<div class="t" style="left:1428.0px;top:196.4px;font-size:12.5px;color:#dcdcdc;transform:scaleX(0.997);">Object</div>
<div class="t" style="left:1496.0px;top:196.4px;font-size:12.5px;color:#dcdcdc;">Material</div>
<div class="t" style="left:1421.0px;top:248.8px;font-size:12.0px;color:#c8c8c8;transform:scaleX(0.983);">Presets</div>
<svg style="left:1440px;top:284px" width="27" height="27" viewBox="0 0 27 27"><circle cx="13.5" cy="13.5" r="13" fill="#c9c9c9"/><circle cx="16" cy="10" r="4" fill="#555"/></svg>
<svg style="left:1507px;top:284px" width="27" height="27" viewBox="0 0 27 27"><defs><radialGradient id="dg"><stop offset="0" stop-color="#6a6a6a"/><stop offset="1" stop-color="#c8c8c8"/></radialGradient></defs><circle cx="13.5" cy="13.5" r="13" fill="url(#dg)"/></svg>
<div class="t" style="left:1433.0px;top:327.4px;font-size:12.5px;color:#d0d0d0;transform:scaleX(0.966);">Standard</div>
<div class="t" style="left:1500.0px;top:327.4px;font-size:12.5px;color:#d0d0d0;">Diffuse</div>
<svg style="left:1438px;top:366px" width="100" height="172" viewBox="0 0 100 172"><g fill="#7a7a7a"><rect x="0.0" y="-0.0" width="1.8" height="1.8"/><rect x="8.8" y="-0.0" width="1.8" height="1.8"/><rect x="17.6" y="-0.0" width="1.8" height="1.8"/><rect x="26.4" y="-0.0" width="1.8" height="1.8"/><rect x="35.2" y="-0.0" width="1.8" height="1.8"/><rect x="44.0" y="-0.0" width="1.8" height="1.8"/><rect x="52.8" y="-0.0" width="1.8" height="1.8"/><rect x="61.6" y="-0.0" width="1.8" height="1.8"/><rect x="70.4" y="-0.0" width="1.8" height="1.8"/><rect x="79.2" y="-0.0" width="1.8" height="1.8"/><rect x="88.0" y="-0.0" width="1.8" height="1.8"/><rect x="0.0" y="8.8" width="1.8" height="1.8"/><rect x="8.8" y="8.8" width="1.8" height="1.8"/><rect x="17.6" y="8.8" width="1.8" height="1.8"/><rect x="26.4" y="8.8" width="1.8" height="1.8"/><rect x="35.2" y="8.8" width="1.8" height="1.8"/><rect x="44.0" y="8.8" width="1.8" height="1.8"/><rect x="52.8" y="8.8" width="1.8" height="1.8"/><rect x="61.6" y="8.8" width="1.8" height="1.8"/><rect x="70.4" y="8.8" width="1.8" height="1.8"/><rect x="79.2" y="8.8" width="1.8" height="1.8"/><rect x="88.0" y="8.8" width="1.8" height="1.8"/><rect x="0.0" y="17.6" width="1.8" height="1.8"/><rect x="8.8" y="17.6" width="1.8" height="1.8"/><rect x="17.6" y="17.6" width="1.8" height="1.8"/><rect x="26.4" y="17.6" width="1.8" height="1.8"/><rect x="35.2" y="17.6" width="1.8" height="1.8"/><rect x="44.0" y="17.6" width="1.8" height="1.8"/><rect x="52.8" y="17.6" width="1.8" height="1.8"/><rect x="61.6" y="17.6" width="1.8" height="1.8"/><rect x="70.4" y="17.6" width="1.8" height="1.8"/><rect x="79.2" y="17.6" width="1.8" height="1.8"/><rect x="88.0" y="17.6" width="1.8" height="1.8"/><rect x="0.0" y="26.4" width="1.8" height="1.8"/><rect x="8.8" y="26.4" width="1.8" height="1.8"/><rect x="17.6" y="26.4" width="1.8" height="1.8"/><rect x="26.4" y="26.4" width="1.8" height="1.8"/><rect x="35.2" y="26.4" width="1.8" height="1.8"/><rect x="44.0" y="26.4" width="1.8" height="1.8"/><rect x="52.8" y="26.4" width="1.8" height="1.8"/><rect x="61.6" y="26.4" width="1.8" height="1.8"/><rect x="70.4" y="26.4" width="1.8" height="1.8"/><rect x="79.2" y="26.4" width="1.8" height="1.8"/><rect x="88.0" y="26.4" width="1.8" height="1.8"/><rect x="0.0" y="35.2" width="1.8" height="1.8"/><rect x="8.8" y="35.2" width="1.8" height="1.8"/><rect x="17.6" y="35.2" width="1.8" height="1.8"/><rect x="26.4" y="35.2" width="1.8" height="1.8"/><rect x="35.2" y="35.2" width="1.8" height="1.8"/><rect x="44.0" y="35.2" width="1.8" height="1.8"/><rect x="52.8" y="35.2" width="1.8" height="1.8"/><rect x="61.6" y="35.2" width="1.8" height="1.8"/><rect x="70.4" y="35.2" width="1.8" height="1.8"/><rect x="79.2" y="35.2" width="1.8" height="1.8"/><rect x="88.0" y="35.2" width="1.8" height="1.8"/><rect x="0.0" y="44.0" width="1.8" height="1.8"/><rect x="8.8" y="44.0" width="1.8" height="1.8"/><rect x="17.6" y="44.0" width="1.8" height="1.8"/><rect x="26.4" y="44.0" width="1.8" height="1.8"/><rect x="35.2" y="44.0" width="1.8" height="1.8"/><rect x="44.0" y="44.0" width="1.8" height="1.8"/><rect x="52.8" y="44.0" width="1.8" height="1.8"/><rect x="61.6" y="44.0" width="1.8" height="1.8"/><rect x="70.4" y="44.0" width="1.8" height="1.8"/><rect x="79.2" y="44.0" width="1.8" height="1.8"/><rect x="88.0" y="44.0" width="1.8" height="1.8"/><rect x="0.0" y="52.8" width="1.8" height="1.8"/><rect x="8.8" y="52.8" width="1.8" height="1.8"/><rect x="17.6" y="52.8" width="1.8" height="1.8"/><rect x="26.4" y="52.8" width="1.8" height="1.8"/><rect x="35.2" y="52.8" width="1.8" height="1.8"/><rect x="44.0" y="52.8" width="1.8" height="1.8"/><rect x="52.8" y="52.8" width="1.8" height="1.8"/><rect x="61.6" y="52.8" width="1.8" height="1.8"/><rect x="70.4" y="52.8" width="1.8" height="1.8"/><rect x="79.2" y="52.8" width="1.8" height="1.8"/><rect x="88.0" y="52.8" width="1.8" height="1.8"/><rect x="0.0" y="61.6" width="1.8" height="1.8"/><rect x="8.8" y="61.6" width="1.8" height="1.8"/><rect x="17.6" y="61.6" width="1.8" height="1.8"/><rect x="26.4" y="61.6" width="1.8" height="1.8"/><rect x="35.2" y="61.6" width="1.8" height="1.8"/><rect x="44.0" y="61.6" width="1.8" height="1.8"/><rect x="52.8" y="61.6" width="1.8" height="1.8"/><rect x="61.6" y="61.6" width="1.8" height="1.8"/><rect x="70.4" y="61.6" width="1.8" height="1.8"/><rect x="79.2" y="61.6" width="1.8" height="1.8"/><rect x="88.0" y="61.6" width="1.8" height="1.8"/><rect x="0.0" y="70.3" width="1.8" height="1.8"/><rect x="8.8" y="70.3" width="1.8" height="1.8"/><rect x="17.6" y="70.3" width="1.8" height="1.8"/><rect x="26.4" y="70.3" width="1.8" height="1.8"/><rect x="35.2" y="70.3" width="1.8" height="1.8"/><rect x="44.0" y="70.3" width="1.8" height="1.8"/><rect x="52.8" y="70.3" width="1.8" height="1.8"/><rect x="61.6" y="70.3" width="1.8" height="1.8"/><rect x="70.4" y="70.3" width="1.8" height="1.8"/><rect x="79.2" y="70.3" width="1.8" height="1.8"/><rect x="88.0" y="70.3" width="1.8" height="1.8"/><rect x="0.0" y="79.2" width="1.8" height="1.8"/><rect x="8.8" y="79.2" width="1.8" height="1.8"/><rect x="17.6" y="79.2" width="1.8" height="1.8"/><rect x="26.4" y="79.2" width="1.8" height="1.8"/><rect x="35.2" y="79.2" width="1.8" height="1.8"/><rect x="44.0" y="79.2" width="1.8" height="1.8"/><rect x="52.8" y="79.2" width="1.8" height="1.8"/><rect x="61.6" y="79.2" width="1.8" height="1.8"/><rect x="70.4" y="79.2" width="1.8" height="1.8"/><rect x="79.2" y="79.2" width="1.8" height="1.8"/><rect x="88.0" y="79.2" width="1.8" height="1.8"/><rect x="0.0" y="88.0" width="1.8" height="1.8"/><rect x="8.8" y="88.0" width="1.8" height="1.8"/><rect x="17.6" y="88.0" width="1.8" height="1.8"/><rect x="26.4" y="88.0" width="1.8" height="1.8"/><rect x="35.2" y="88.0" width="1.8" height="1.8"/><rect x="44.0" y="88.0" width="1.8" height="1.8"/><rect x="52.8" y="88.0" width="1.8" height="1.8"/><rect x="61.6" y="88.0" width="1.8" height="1.8"/><rect x="70.4" y="88.0" width="1.8" height="1.8"/><rect x="79.2" y="88.0" width="1.8" height="1.8"/><rect x="88.0" y="88.0" width="1.8" height="1.8"/><rect x="0.0" y="96.8" width="1.8" height="1.8"/><rect x="8.8" y="96.8" width="1.8" height="1.8"/><rect x="17.6" y="96.8" width="1.8" height="1.8"/><rect x="26.4" y="96.8" width="1.8" height="1.8"/><rect x="35.2" y="96.8" width="1.8" height="1.8"/><rect x="44.0" y="96.8" width="1.8" height="1.8"/><rect x="52.8" y="96.8" width="1.8" height="1.8"/><rect x="61.6" y="96.8" width="1.8" height="1.8"/><rect x="70.4" y="96.8" width="1.8" height="1.8"/><rect x="79.2" y="96.8" width="1.8" height="1.8"/><rect x="88.0" y="96.8" width="1.8" height="1.8"/><rect x="0.0" y="105.6" width="1.8" height="1.8"/><rect x="8.8" y="105.6" width="1.8" height="1.8"/><rect x="17.6" y="105.6" width="1.8" height="1.8"/><rect x="26.4" y="105.6" width="1.8" height="1.8"/><rect x="35.2" y="105.6" width="1.8" height="1.8"/><rect x="44.0" y="105.6" width="1.8" height="1.8"/><rect x="52.8" y="105.6" width="1.8" height="1.8"/><rect x="61.6" y="105.6" width="1.8" height="1.8"/><rect x="70.4" y="105.6" width="1.8" height="1.8"/><rect x="79.2" y="105.6" width="1.8" height="1.8"/><rect x="88.0" y="105.6" width="1.8" height="1.8"/><rect x="0.0" y="114.3" width="1.8" height="1.8"/><rect x="8.8" y="114.3" width="1.8" height="1.8"/><rect x="17.6" y="114.3" width="1.8" height="1.8"/><rect x="26.4" y="114.3" width="1.8" height="1.8"/><rect x="35.2" y="114.3" width="1.8" height="1.8"/><rect x="44.0" y="114.3" width="1.8" height="1.8"/><rect x="52.8" y="114.3" width="1.8" height="1.8"/><rect x="61.6" y="114.3" width="1.8" height="1.8"/><rect x="70.4" y="114.3" width="1.8" height="1.8"/><rect x="79.2" y="114.3" width="1.8" height="1.8"/><rect x="88.0" y="114.3" width="1.8" height="1.8"/><rect x="0.0" y="123.2" width="1.8" height="1.8"/><rect x="8.8" y="123.2" width="1.8" height="1.8"/><rect x="17.6" y="123.2" width="1.8" height="1.8"/><rect x="26.4" y="123.2" width="1.8" height="1.8"/><rect x="35.2" y="123.2" width="1.8" height="1.8"/><rect x="44.0" y="123.2" width="1.8" height="1.8"/><rect x="52.8" y="123.2" width="1.8" height="1.8"/><rect x="61.6" y="123.2" width="1.8" height="1.8"/><rect x="70.4" y="123.2" width="1.8" height="1.8"/><rect x="79.2" y="123.2" width="1.8" height="1.8"/><rect x="88.0" y="123.2" width="1.8" height="1.8"/><rect x="0.0" y="132.0" width="1.8" height="1.8"/><rect x="8.8" y="132.0" width="1.8" height="1.8"/><rect x="17.6" y="132.0" width="1.8" height="1.8"/><rect x="26.4" y="132.0" width="1.8" height="1.8"/><rect x="35.2" y="132.0" width="1.8" height="1.8"/><rect x="44.0" y="132.0" width="1.8" height="1.8"/><rect x="52.8" y="132.0" width="1.8" height="1.8"/><rect x="61.6" y="132.0" width="1.8" height="1.8"/><rect x="70.4" y="132.0" width="1.8" height="1.8"/><rect x="79.2" y="132.0" width="1.8" height="1.8"/><rect x="88.0" y="132.0" width="1.8" height="1.8"/><rect x="0.0" y="140.8" width="1.8" height="1.8"/><rect x="8.8" y="140.8" width="1.8" height="1.8"/><rect x="17.6" y="140.8" width="1.8" height="1.8"/><rect x="26.4" y="140.8" width="1.8" height="1.8"/><rect x="35.2" y="140.8" width="1.8" height="1.8"/><rect x="44.0" y="140.8" width="1.8" height="1.8"/><rect x="52.8" y="140.8" width="1.8" height="1.8"/><rect x="61.6" y="140.8" width="1.8" height="1.8"/><rect x="70.4" y="140.8" width="1.8" height="1.8"/><rect x="79.2" y="140.8" width="1.8" height="1.8"/><rect x="88.0" y="140.8" width="1.8" height="1.8"/><rect x="0.0" y="149.6" width="1.8" height="1.8"/><rect x="8.8" y="149.6" width="1.8" height="1.8"/><rect x="17.6" y="149.6" width="1.8" height="1.8"/><rect x="26.4" y="149.6" width="1.8" height="1.8"/><rect x="35.2" y="149.6" width="1.8" height="1.8"/><rect x="44.0" y="149.6" width="1.8" height="1.8"/><rect x="52.8" y="149.6" width="1.8" height="1.8"/><rect x="61.6" y="149.6" width="1.8" height="1.8"/><rect x="70.4" y="149.6" width="1.8" height="1.8"/><rect x="79.2" y="149.6" width="1.8" height="1.8"/><rect x="88.0" y="149.6" width="1.8" height="1.8"/><rect x="0.0" y="158.3" width="1.8" height="1.8"/><rect x="8.8" y="158.3" width="1.8" height="1.8"/><rect x="17.6" y="158.3" width="1.8" height="1.8"/><rect x="26.4" y="158.3" width="1.8" height="1.8"/><rect x="35.2" y="158.3" width="1.8" height="1.8"/><rect x="44.0" y="158.3" width="1.8" height="1.8"/><rect x="52.8" y="158.3" width="1.8" height="1.8"/><rect x="61.6" y="158.3" width="1.8" height="1.8"/><rect x="70.4" y="158.3" width="1.8" height="1.8"/><rect x="79.2" y="158.3" width="1.8" height="1.8"/><rect x="88.0" y="158.3" width="1.8" height="1.8"/><rect x="0.0" y="167.2" width="1.8" height="1.8"/><rect x="8.8" y="167.2" width="1.8" height="1.8"/><rect x="17.6" y="167.2" width="1.8" height="1.8"/><rect x="26.4" y="167.2" width="1.8" height="1.8"/><rect x="35.2" y="167.2" width="1.8" height="1.8"/><rect x="44.0" y="167.2" width="1.8" height="1.8"/><rect x="52.8" y="167.2" width="1.8" height="1.8"/><rect x="61.6" y="167.2" width="1.8" height="1.8"/><rect x="70.4" y="167.2" width="1.8" height="1.8"/><rect x="79.2" y="167.2" width="1.8" height="1.8"/><rect x="88.0" y="167.2" width="1.8" height="1.8"/></g></svg>
<svg style="left:1409px;top:395px" width="126" height="100" viewBox="1409 395 126 100"><defs><linearGradient id="dome" x1="0" y1="0" x2="1" y2="0"><stop offset="0" stop-color="#9c9c9c"/><stop offset="1" stop-color="#c6c6c6"/></linearGradient></defs><path d="M1469 442.5 L1506 440 C1506 455 1516 462 1535 463 L1535 475 L1521 476 Z" fill="#4b4b4b"/><path d="M1535 407 C1520 410 1505 428 1504 447 C1505 457 1518 462 1535 462 Z" fill="url(#dome)"/><path d="M1469 443 L1521 475" stroke="#a2a2a2" stroke-width="1.1"/></svg>
<div class="a" style="left:1433px;top:588px;width:102px;height:30px;background:#5a5a5a"></div>
<svg style="left:1443px;top:598px" width="16" height="10" viewBox="0 0 16 10"><path d="M1 5 C4 0 12 0 15 5 C12 10 4 10 1 5 Z" fill="#7a7a7a"/><circle cx="8" cy="5" r="2.5" fill="#5a5a5a"/></svg>
<div class="t" style="left:1473.0px;top:597.8px;font-size:12.0px;color:#6e6e6e;">Light 2</div>
<div class="a" style="left:1433px;top:618px;width:102px;height:95px;border:1px solid #5e5e5e;border-right:none"></div>
<div class="t" style="left:1433.0px;top:768.8px;font-size:12.0px;color:#6a6a6a;">Color</div>
<div class="t" style="left:1433.0px;top:807.8px;font-size:12.0px;color:#6a6a6a;">Intensity</div>
<div class="a" style="left:1435px;top:840px;width:100px;height:1px;background:#626262"></div>
<div class="a" style="left:1487px;top:833px;width:14px;height:14px;border-radius:50%;border:2px solid #6e6e6e;background:#555"></div>
<div class="t" style="left:1433.0px;top:868.8px;font-size:12.0px;color:#6a6a6a;">Rotation</div>
<div class="a" style="left:1435px;top:901px;width:100px;height:1px;background:#626262"></div>
<div class="t" style="left:1433.0px;top:930.8px;font-size:12.0px;color:#6a6a6a;">Height</div>
<div class="a" style="left:1435px;top:962px;width:100px;height:1px;background:#626262"></div>
<svg style="left:1417px;top:1002px" width="17" height="17" viewBox="0 0 17 17"><circle cx="8.5" cy="8.5" r="7.3" fill="none" stroke="#c8c8c8" stroke-width="1.4"/><rect x="7.7" y="7" width="1.6" height="6" fill="#c8c8c8"/><circle cx="8.5" cy="4.8" r="1" fill="#c8c8c8"/></svg>
<div class="t" style="left:1443.0px;top:1004.4px;font-size:12.5px;color:#e0e0e0;transform:scaleX(0.982);">Share feedback</div>
<div class="a" style="left:1443px;top:1017px;width:86px;height:1px;border-top:1px dotted #bbb"></div>

<!-- BROWSER -->
<div id="browser" class="a" style="left:1535px;top:43px;width:385px;height:977px;background:#424242;border-top-left-radius:9px;overflow:hidden">
</div>
<div class="a" style="left:1535px;top:43px;width:385px;height:57px;background:#333333;border-top-left-radius:9px"></div>
<div class="a" style="left:1545px;top:50px;width:42px;height:42px;background:#424242;border-radius:12px"></div>
<svg style="left:1558px;top:66px" width="13" height="9" viewBox="0 0 13 9"><path d="M1.5 1.5 L6.5 6.5 L11.5 1.5" fill="none" stroke="#e6e6e6" stroke-width="2.2"/></svg>
<div class="a" style="left:1597px;top:50px;width:323px;height:55px;background:#424242;border-radius:10px 0 0 0"></div>
<svg style="left:1587px;top:90px" width="10" height="10" viewBox="0 0 10 10"><path d="M10 0 L10 10 L0 10 C6 10 10 6 10 0 Z" fill="#424242"/></svg>
<svg style="left:1606px;top:60px" width="24" height="24" viewBox="0 0 24 24"><circle cx="12" cy="12" r="12" fill="#1877f2"/><path d="M13.3 24 L13.3 15.2 L16.3 15.2 L16.8 11.8 L13.3 11.8 L13.3 9.6 C13.3 8.6 13.8 7.8 15.2 7.8 L16.9 7.8 L16.9 4.8 C16.3 4.7 15.2 4.6 14.2 4.6 C11.5 4.6 9.8 6.2 9.8 9.2 L9.8 11.8 L6.9 11.8 L6.9 15.2 L9.8 15.2 L9.8 24 Z" fill="#fff"/></svg>
<div class="t" style="left:1643.0px;top:63.3px;font-size:18.5px;color:#e3e3e3;transform:scaleX(0.919);">(3) Live Producer | Facebook</div>
<div class="a" style="left:1845px;top:55px;width:22px;height:35px;background:linear-gradient(90deg,rgba(66,66,66,0),#424242 80%)"></div>
<svg style="left:1872px;top:61px" width="20" height="20" viewBox="0 0 20 20"><circle cx="10" cy="10" r="8.5" fill="none" stroke="#f2bfd0" stroke-width="2.2"/><circle cx="10" cy="10" r="5.5" fill="#eba3b8"/></svg>
<svg style="left:1910px;top:65px" width="12" height="12" viewBox="0 0 12 12"><path d="M1 1 L11 11 M11 1 L1 11" stroke="#e3e3e3" stroke-width="2.2"/></svg>
<svg style="left:1558px;top:125px" width="20" height="20" viewBox="0 0 20 20"><path d="M19 10 L2 10 M9.5 2.5 L2 10 L9.5 17.5" fill="none" stroke="#e3e3e3" stroke-width="2.2"/></svg>
<svg style="left:1611px;top:125px" width="20" height="20" viewBox="0 0 20 20"><path d="M1 10 L18 10 M10.5 2.5 L18 10 L10.5 17.5" fill="none" stroke="#8e8e8e" stroke-width="2.2"/></svg>
<svg style="left:1665px;top:125px" width="20" height="20" viewBox="0 0 20 20"><path d="M17.5 10 A7.5 7.5 0 1 1 15 4.4" fill="none" stroke="#e3e3e3" stroke-width="2.2"/><path d="M11.5 1.5 L18 1.5 L18 8 Z" fill="#e3e3e3"/></svg>
<div class="a" style="left:1715px;top:110px;width:220px;height:50px;background:#323232;border-radius:25px"></div>
<div class="a" style="left:1723px;top:117px;width:36px;height:36px;background:#a8c4f2;border-radius:50%"></div>
<svg style="left:1731px;top:126px" width="20" height="18" viewBox="0 0 20 18"><rect x="2" y="2.5" width="12" height="12" rx="1" fill="none" stroke="#27467c" stroke-width="2"/><path d="M14 7 L18 4 L18 13 L14 10 Z" fill="#27467c"/></svg>
<div class="t" style="left:1770.5px;top:123.8px;font-size:21.5px;color:#e6e6e6;transform:scaleX(0.94);">facebook.com/live</div>
<svg style="left:1562px;top:180px" width="22" height="22" viewBox="0 0 22 22"><g fill="none" stroke="#c8c8c8" stroke-width="2.2"><rect x="1.5" y="1.5" width="7" height="7"/><rect x="13.5" y="1.5" width="7" height="7"/><rect x="1.5" y="13.5" width="7" height="7"/><rect x="13.5" y="13.5" width="7" height="7"/></g></svg>
<div class="a" style="left:1607px;top:178px;width:2px;height:25px;background:#555"></div>
<svg style="left:1631px;top:177px" width="23" height="26" viewBox="0 0 23 26"><path d="M3 6 L16 4 L21 24 L2 25 Z" fill="#95bf47"/><path d="M16 4 L21 24 L14 25 Z" fill="#5e8e3e"/><path d="M6 6 C6 1 11 0 12 5" fill="none" stroke="#95bf47" stroke-width="1.5"/><text x="6" y="20" font-family="Liberation Sans" font-weight="700" font-size="13" fill="#fff">S</text></svg>
<div class="t" style="left:1663.0px;top:180.9px;font-size:19.0px;color:#e3e3e3;transform:scaleX(0.916);">Exit</div>
<div class="a" style="left:1716px;top:178px;width:24px;height:24px;background:#0d0d0d;border-radius:6px"></div>
<svg style="left:1718px;top:180px" width="20" height="20" viewBox="0 0 20 20"><g fill="none" stroke="#f0f0f0" stroke-width="1.4"><ellipse cx="10" cy="10" rx="7.5" ry="3.3"/><ellipse cx="10" cy="10" rx="7.5" ry="3.3" transform="rotate(60 10 10)"/><ellipse cx="10" cy="10" rx="7.5" ry="3.3" transform="rotate(120 10 10)"/></g></svg>
<div class="t" style="left:1749.0px;top:180.9px;font-size:19.0px;color:#e3e3e3;transform:scaleX(0.925);">Galaxy and Molecul...</div>

<!-- FB PAGE -->
<div class="a" style="left:1535px;top:222px;width:385px;height:798px;background:#ebebeb"></div>
<div class="a" style="left:1535px;top:306px;width:385px;height:2px;background:#dcdcdc;box-shadow:0 1px 3px rgba(0,0,0,0.08)"></div>
<svg style="left:1559px;top:234px" width="60" height="60" viewBox="0 0 60 60"><circle cx="30" cy="30" r="29.5" fill="#1b6ce6"/><path d="M33.5 60 L33.5 38 L41 38 L42.2 29.5 L33.5 29.5 L33.5 24 C33.5 21.5 34.6 19.6 38.2 19.6 L42.4 19.6 L42.4 12 C41 11.8 38.2 11.5 35.6 11.5 C28.8 11.5 24.6 15.5 24.6 23 L24.6 29.5 L17.3 29.5 L17.3 38 L24.6 38 L24.6 60 Z" fill="#fff"/></svg>
<div class="a" style="left:1631px;top:235px;width:58px;height:58px;background:#dfdfdf;border-radius:50%"></div>
<svg style="left:1648px;top:252px" width="24" height="24" viewBox="0 0 24 24"><circle cx="10" cy="10" r="7" fill="none" stroke="#555" stroke-width="2.4"/><path d="M15 15 L21 21" stroke="#555" stroke-width="2.8" stroke-linecap="round"/></svg>
<svg style="left:1874px;top:247px" width="36" height="36" viewBox="0 0 36 36"><path d="M3 16 L18 3 L33 16 L33 31 C33 32.5 32 33.5 30.5 33.5 L22 33.5 L22 24 C22 22.5 21 21.5 19.5 21.5 L16.5 21.5 C15 21.5 14 22.5 14 24 L14 33.5 L5.5 33.5 C4 33.5 3 32.5 3 31 Z" fill="none" stroke="#606060" stroke-width="2.6" stroke-linejoin="round"/></svg>
<div class="t" style="left:1559.5px;top:346.5px;font-size:37.0px;color:#141414;font-weight:700;transform:scaleX(0.949);">Create live video</div>
<div class="a" style="left:1559px;top:432px;width:361px;height:13px;background:#dedfe0;border-radius:6px 0 0 6px"></div>
<div class="a" style="left:1559px;top:432px;width:285px;height:13px;background:#1b66e4;border-radius:6.5px 2px 2px 6.5px"></div>
<svg style="left:1558px;top:478px" width="31" height="31" viewBox="0 0 31 31"><circle cx="15.5" cy="15.5" r="15" fill="#23a832"/><path d="M8.5 16 L13.5 21 L22.5 11" fill="none" stroke="#fff" stroke-width="3"/></svg>
<div class="t" style="left:1607.0px;top:484.3px;font-size:22.5px;color:#1c1c1c;transform:scaleX(1.011);-webkit-text-stroke:0.45px #1c1c1c;">Connect video source</div>
<svg style="left:1558px;top:544px" width="31" height="31" viewBox="0 0 31 31"><circle cx="15.5" cy="15.5" r="15" fill="#23a832"/><path d="M8.5 16 L13.5 21 L22.5 11" fill="none" stroke="#fff" stroke-width="3"/></svg>
<div class="t" style="left:1607.0px;top:550.3px;font-size:22.5px;color:#1c1c1c;transform:scaleX(1.026);-webkit-text-stroke:0.45px #1c1c1c;">Complete post details</div>
<svg style="left:1558px;top:610px" width="31" height="31" viewBox="0 0 31 31"><circle cx="15.5" cy="15.5" r="13.8" fill="none" stroke="#6a6a6a" stroke-width="2.6"/></svg>
<div class="t" style="left:1607.0px;top:616.3px;font-size:22.5px;color:#1c1c1c;transform:scaleX(1.000);-webkit-text-stroke:0.45px #1c1c1c;">Go live</div>
<div class="a" style="left:1559px;top:682px;width:361px;height:1.5px;background:#d2d2d2"></div>
<svg style="left:1560px;top:722px" width="56" height="56" viewBox="0 0 56 56"><defs><radialGradient id="av" cx="0.5" cy="0.45" r="0.55"><stop offset="0" stop-color="#5a1d66"/><stop offset="0.55" stop-color="#35163e"/><stop offset="1" stop-color="#160d16"/></radialGradient><linearGradient id="av2" x1="0" y1="0" x2="1" y2="0"><stop offset="0" stop-color="#5a3aa8"/><stop offset="0.5" stop-color="#3a4cc0"/><stop offset="1" stop-color="#2a2a90"/></linearGradient><clipPath id="avc"><circle cx="28" cy="28" r="28"/></clipPath></defs><g clip-path="url(#avc)"><rect width="56" height="56" fill="url(#av)"/><path d="M0 42 C10 40 18 46 28 49 C36 47 44 40 56 38 L56 56 L0 56 Z" fill="url(#av2)"/><path d="M38 34 C44 36 46 44 44 52 L36 52 C38 46 36 40 38 34 Z" fill="#6a3aa0" opacity="0.8"/></g></svg>
<div class="t" style="left:1635.0px;top:722.5px;font-size:23.0px;color:#1c1c1c;transform:scaleX(0.994);-webkit-text-stroke:0.6px #1c1c1c;">Glen MostWanted Pru</div>
<div class="t" style="left:1635.0px;top:755.0px;font-size:23.0px;color:#2c2c2c;transform:scaleX(0.996);-webkit-text-stroke:0.25px #2c2c2c;">Host - Your profile</div>
<div class="a" style="left:1552px;top:815px;width:380px;height:86px;border:1.3px solid #d0d0d0;border-radius:8px"></div>
<div class="t" style="left:1578.0px;top:833.8px;font-size:18.5px;color:#777777;transform:scaleX(0.961);">Choose where to post</div>
<div class="t" style="left:1578.0px;top:861.5px;font-size:22.5px;color:#1c1c1c;transform:scaleX(1.056);-webkit-text-stroke:0.2px #1c1c1c;">Post on timeline</div>
<div class="a" style="left:1535px;top:919px;width:385px;height:31px;overflow:hidden">
 <div class="a" style="left:17px;top:0;width:380px;height:86px;border:1.3px solid #d0d0d0;border-radius:8px"></div>
 <div class="t" style="left:43.0px;top:20.6px;font-size:17.0px;color:#737373;transform:scaleX(1.048);">When are you going live?</div>
</div>
<div class="a" style="left:1535px;top:950px;width:385px;height:1.3px;background:#d6d6d6"></div>
<div class="a" style="left:1559px;top:975px;width:83px;height:50px;background:#d8d9dc;border-radius:8px"></div>
<div class="t" style="left:1578.0px;top:992.4px;font-size:22.0px;color:#1c1c1c;font-weight:700;transform:scaleX(0.894);">Back</div>
<div class="a" style="left:1654px;top:975px;width:280px;height:50px;background:#1b66e3;border-radius:8px"></div>
<svg style="left:1800px;top:990px" width="25" height="24" viewBox="0 0 25 24"><rect x="0" y="1" width="19" height="22" rx="4" fill="#fff"/><circle cx="9.5" cy="12" r="5" fill="#1b66e3"/><circle cx="9.5" cy="12" r="2.2" fill="#fff"/><rect x="20.5" y="4" width="3.5" height="16" rx="1.5" fill="#fff"/></svg>
<div class="t" style="left:1834.0px;top:992.4px;font-size:22.0px;color:#ffffff;font-weight:700;transform:scaleX(0.954);">Go live</div>

<!-- TASKBAR -->
<div id="taskbar" class="a" style="left:0;top:1020px;width:1920px;height:60px;background:#8c0a20"></div>
<div class="a" style="left:0;top:1020px;width:1920px;height:1.5px;background:#6a3540"></div>
<svg style="left:22px;top:1028px" width="40" height="40" viewBox="0 0 40 40"><path d="M6 20 C8 12 15 10 20 13 L14 24 Z" fill="#f5b860"/><path d="M5 34 C1 34 1 27 6 26 C6 20 14 18 17 22 C20 17 30 19 29 26 C34 26 34 34 29 34 Z" fill="#d9e4f0"/><path d="M5 34 C1 34 1 29 5 28 L29 28 C34 29 33 34 29 34 Z" fill="#b8c8dc"/><circle cx="26" cy="10" r="8.5" fill="#e89aa6"/><text x="22.5" y="14.5" font-family="Liberation Sans" font-size="12" fill="#5a1414">3</text></svg>
<div class="t" style="left:64.0px;top:1033.3px;font-size:15.0px;color:#f8eaea;transform:scaleX(0.942);">65°F</div>
<div class="t" style="left:64.0px;top:1052.9px;font-size:15.5px;color:#f2dada;transform:scaleX(1.001);">Mostly cloudy</div>
<svg style="left:502px;top:1036px" width="30" height="30" viewBox="0 0 30 30"><defs><linearGradient id="wl" x1="0" y1="0" x2="1" y2="1"><stop offset="0" stop-color="#8fdcf8"/><stop offset="1" stop-color="#1f95e0"/></linearGradient></defs><g fill="url(#wl)"><rect x="0" y="0" width="14" height="14"/><rect x="16" y="0" width="14" height="14"/><rect x="0" y="16" width="14" height="14"/><rect x="16" y="16" width="14" height="14"/></g></svg>
<div class="a" style="left:549px;top:1030px;width:276px;height:41px;background:#a02a3b;border-radius:21px;border:1px solid #ad3a4a"></div>
<svg style="left:563px;top:1041px" width="22" height="22" viewBox="0 0 22 22"><circle cx="9" cy="9" r="6.8" fill="none" stroke="#f6cdd2" stroke-width="2.2"/><path d="M14 14 L19.5 19.5" stroke="#f6cdd2" stroke-width="2.4" stroke-linecap="round"/></svg>
<div class="t" style="left:596.0px;top:1042.8px;font-size:18.0px;color:#f5d3d8;transform:scaleX(0.894);">Search</div>
<svg style="left:762px;top:1033px" width="52" height="33" viewBox="0 0 52 33"><rect x="14" y="1" width="23" height="31" fill="#3b5ccc"/><rect x="16" y="1" width="3" height="31" fill="#6a8ae8"/><rect x="32" y="1" width="3" height="31" fill="#6a8ae8"/><path d="M25.5 3 L35 31 L16 31 Z" fill="#4cc03c"/><path d="M25.5 3 L29 14 L22 14 Z" fill="#7ad860"/><g fill="#c8f0a0"><circle cx="24" cy="12" r="1"/><circle cx="27" cy="18" r="1"/><circle cx="22" cy="23" r="1"/><circle cx="29" cy="26" r="1"/></g><circle cx="25.5" cy="3" r="2" fill="#f8e040"/><rect x="1" y="22" width="15" height="9" rx="1" fill="#3c64d0"/><rect x="35" y="22" width="16" height="9" rx="1" fill="#3c64d0"/><g fill="#a8c8f8"><rect x="3" y="24" width="3" height="3"/><rect x="8" y="24" width="3" height="3"/><rect x="39" y="24" width="3" height="3"/><rect x="44" y="24" width="3" height="3"/></g></svg>
<svg style="left:839px;top:1035px" width="31" height="30" viewBox="0 0 31 30"><rect x="1" y="10" width="21" height="19" fill="#6e6e6e"/><rect x="8" y="2" width="22" height="20" fill="#ececec"/><rect x="8" y="10" width="14" height="12" fill="#b4b4b4"/></svg>
<svg style="left:893px;top:1034px" width="34" height="31" viewBox="0 0 34 31"><defs><linearGradient id="cpa" x1="0" y1="0" x2="0" y2="1"><stop offset="0" stop-color="#45a8f0"/><stop offset="0.55" stop-color="#4cc060"/><stop offset="1" stop-color="#f2d030"/></linearGradient><linearGradient id="cpb" x1="0" y1="0" x2="0" y2="1"><stop offset="0" stop-color="#b048e0"/><stop offset="0.5" stop-color="#e060a0"/><stop offset="1" stop-color="#f89070"/></linearGradient></defs><path d="M7 2 L21 2 C24 2 25 4 24 7 L20 19 C19 21 17 22 15 22 L5 22 C2 22 1 20 2 17 L5 5 C6 3 6 2 7 2 Z" fill="url(#cpa)"/><path d="M18 10 L29 10 C32 10 33 12 32 15 L28 27 C27 29 25 29 23 29 L13 29 C10 29 9 27 10 24 L14 13 C15 11 16 10 18 10 Z" fill="url(#cpb)"/><path d="M18 2 L21 2 C24 2 25 4 24 7 L23 10 L18 10 C16 10 15 11 14 13 Z" fill="#2a4cc8"/><path d="M10 22 L15 22 C17 22 19 21 20 19 L16 29 L13 29 C10 29 9 27 10 24 Z" fill="#f06050"/></svg>
<svg style="left:949px;top:1035px" width="32" height="32" viewBox="0 0 32 32"><defs><linearGradient id="ed" x1="0" y1="0.2" x2="1" y2="0.5"><stop offset="0" stop-color="#2a98e0"/><stop offset="0.55" stop-color="#38c8c8"/><stop offset="1" stop-color="#70e060"/></linearGradient><linearGradient id="ed2" x1="0" y1="0" x2="0.5" y2="1"><stop offset="0" stop-color="#2080d0"/><stop offset="1" stop-color="#1a5cb0"/></linearGradient></defs><circle cx="16" cy="16" r="15" fill="url(#ed)"/><path d="M1.5 18 C2 24 8 31 16 31 C22 31 27 28 29 23 C24 25 18 24 15 21 C12 18 12 14 15 12 C9 12 4 14 1.5 18 Z" fill="url(#ed2)"/><circle cx="17" cy="17" r="4" fill="#8c0a20"/><path d="M19 15.5 L30.5 19.5 L29.5 22.5 L19 18.5 Z" fill="#1a58a8"/></svg>
<svg style="left:1007px;top:1035px" width="24" height="30" viewBox="0 0 24 30"><path d="M4 12 L3 2 L8 7 L16 7 L21 2 L20 12 C23 16 23 23 21 29 L3 29 C1 23 1 16 4 12 Z" fill="#f4f4f4" stroke="#151515" stroke-width="1.3"/><ellipse cx="12" cy="18" rx="5.5" ry="3.5" fill="none" stroke="#222" stroke-width="1.1"/><circle cx="7.5" cy="16.5" r="1.2" fill="#111"/><circle cx="16.5" cy="16.5" r="1.2" fill="#111"/><circle cx="12" cy="18" r="1.3" fill="#111"/></svg>
<div class="a" style="left:1060px;top:1036px;width:30px;height:29px;background:#353535;border-radius:6px"></div>
<svg style="left:1064px;top:1042px" width="22" height="16" viewBox="0 0 22 16"><path d="M2 2 L2 14 L7 14 M2 2 L8 2 L14 14 L20 14 L20 2 L15 2" fill="none" stroke="#e6e6e6" stroke-width="2"/></svg>
<svg style="left:1114px;top:1040px" width="31" height="22" viewBox="0 0 31 22"><path d="M6 0 L31 0 L25 22 L0 22 Z" fill="#3d6fd4"/><path d="M8 5 L15 10.5 L7 16" fill="none" stroke="#fff" stroke-width="2"/><rect x="15" y="15" width="8" height="2" fill="#fff"/></svg>
<svg style="left:1168px;top:1037px" width="33" height="27" viewBox="0 0 33 27"><path d="M0 2 C0 1 1 0 2 0 L11 0 L14 3 L31 3 C32 3 33 4 33 5 L33 25 C33 26 32 27 31 27 L2 27 C1 27 0 26 0 25 Z" fill="#f5c542"/><rect x="0" y="7" width="33" height="20" rx="1" fill="#fad75a"/><rect x="7" y="18" width="19" height="9" fill="#2a7ad0"/></svg>
<div class="a" style="left:1183px;top:1071px;width:7px;height:3px;background:#e8a8b0;border-radius:2px"></div>
<svg style="left:1223px;top:1035px" width="40" height="32" viewBox="0 0 40 32"><circle cx="16" cy="16" r="15.5" fill="#e04030"/><path d="M16 16 L29.4 8.25 A15.5 15.5 0 0 1 16 31.5 Z" fill="#f8c020"/><path d="M16 16 L16 31.5 A15.5 15.5 0 0 1 2.6 8.25 Z" fill="#20a040"/><circle cx="16" cy="16" r="7" fill="#fff"/><circle cx="16" cy="16" r="5.5" fill="#3080e8"/><circle cx="28" cy="4" r="9" fill="#c8b8b0" stroke="#f0e0e0" stroke-width="1.5"/><circle cx="28" cy="3" r="4" fill="#6a5040"/></svg>
<div class="a" style="left:1238px;top:1071px;width:7px;height:3px;background:#e8a8b0;border-radius:2px"></div>
<svg style="left:1280px;top:1035px" width="31" height="31" viewBox="0 0 31 31"><circle cx="15.5" cy="15.5" r="15" fill="#1ed760"/><path d="M7 11 C13 9 19 9.5 24 12 M8 15.5 C13 14 18 14.5 22.5 16.5 M9 20 C13 19 17 19.2 20.5 21" fill="none" stroke="#111" stroke-width="2.4" stroke-linecap="round"/></svg>
<div class="a" style="left:1293px;top:1071px;width:7px;height:3px;background:#e8a8b0;border-radius:2px"></div>
<div class="a" style="left:1335px;top:1036px;width:28px;height:27px;background:#2e0808;border-radius:4px"></div>
<div class="t" style="left:1339.0px;top:1042.6px;font-size:17.0px;color:#f3a02c;font-weight:700;transform:scaleX(1.176);">Ai</div>
<div class="a" style="left:1347px;top:1071px;width:7px;height:3px;background:#e8a8b0;border-radius:2px"></div>
<div class="a" style="left:1379px;top:1026px;width:50px;height:49px;background:#9a1d31;border-radius:6px"></div>
<svg style="left:1389px;top:1032px" width="36" height="34" viewBox="0 0 36 34"><circle cx="15.5" cy="18.5" r="14.5" fill="#3a3a3a" stroke="#e8d8d8" stroke-width="1.5"/><circle cx="15.5" cy="11" r="5" fill="#3a3a3a" stroke="#ddd" stroke-width="1.6"/><circle cx="9" cy="22.5" r="5" fill="#3a3a3a" stroke="#ddd" stroke-width="1.6"/><circle cx="22" cy="22.5" r="5" fill="#3a3a3a" stroke="#ddd" stroke-width="1.6"/><circle cx="26.5" cy="7" r="6.5" fill="#e8101c"/></svg>
<div class="a" style="left:1394px;top:1071px;width:21px;height:3px;background:#ee8898;border-radius:2px"></div>
<svg style="left:1578px;top:1045px" width="16" height="10" viewBox="0 0 16 10"><path d="M1.5 8.5 L8 2 L14.5 8.5" fill="none" stroke="#f6e0e0" stroke-width="2.2"/></svg>
<svg style="left:1614px;top:1041px" width="24" height="20" viewBox="0 0 24 20"><path d="M4 15 C0 15 0 9 4 9 C4 4 11 3 13 7 C16 5 20 8 19 12 L19 15 Z" fill="#e6b8bc"/><circle cx="18" cy="15" r="5" fill="#8c0a20"/><path d="M15.5 12.5 L20.5 17.5 M20.5 12.5 L15.5 17.5" stroke="#ff4050" stroke-width="1.8"/></svg>
<svg style="left:1659px;top:1040px" width="15" height="21" viewBox="0 0 15 21"><rect x="3.5" y="0.5" width="8" height="13" rx="4" fill="none" stroke="#e88a98" stroke-width="1.8"/><path d="M1 9 C1 17 14 17 14 9 M7.5 15.5 L7.5 20.5" fill="none" stroke="#e88a98" stroke-width="1.8"/></svg>
<svg style="left:1695px;top:1040px" width="23" height="21" viewBox="0 0 23 21"><rect x="1" y="3" width="15" height="12" fill="none" stroke="#f6e6e6" stroke-width="1.8"/><path d="M5 19 L12 19 M8.5 15 L8.5 19" stroke="#f6e6e6" stroke-width="1.8"/><rect x="16" y="1" width="5" height="9" rx="1" fill="none" stroke="#f6e6e6" stroke-width="1.6"/><path d="M18.5 10 L18.5 18" stroke="#f6e6e6" stroke-width="1.6"/></svg>
<svg style="left:1726px;top:1041px" width="21" height="19" viewBox="0 0 21 19"><path d="M1 6 L5 6 L10 1.5 L10 17.5 L5 13 L1 13 Z" fill="none" stroke="#f6e6e6" stroke-width="1.8" stroke-linejoin="round"/><path d="M13 6.5 C14.5 8 14.5 11 13 12.5 M15.5 4 C18.5 7 18.5 12 15.5 15 M18 1.5 C22 6 22 13 18 17.5" fill="none" stroke="#f6e6e6" stroke-width="1.6"/></svg>
<svg style="left:1755px;top:1039px" width="23" height="21" viewBox="0 0 23 21"><rect x="1" y="6" width="18" height="12" rx="2" fill="none" stroke="#f6e6e6" stroke-width="1.8"/><rect x="19.5" y="9.5" width="2.5" height="5" fill="#f6e6e6"/><rect x="3.5" y="8.5" width="13" height="7" fill="#f0d8d8"/><path d="M7 0 L4 6 L8 6 L5 11" fill="none" stroke="#f6e6e6" stroke-width="1.4"/></svg>
<div class="t" style="left:1804.0px;top:1032.7px;font-size:14.5px;color:#f8eaea;transform:scaleX(0.999);">10:12 PM</div>
<div class="t" style="left:1797.5px;top:1052.7px;font-size:14.5px;color:#f8eaea;transform:scaleX(1.070);">12/4/2024</div>
<svg style="left:1877px;top:1040px" width="18" height="22" viewBox="0 0 18 22"><path d="M9 1 C4 1 2.5 5 2.5 9 L2.5 14 L0.5 17 L17.5 17 L15.5 14 L15.5 9 C15.5 5 14 1 9 1 Z" fill="#f0909c"/><path d="M6 19 C6 22 12 22 12 19 Z" fill="#f0909c"/></svg>

</body></html>
